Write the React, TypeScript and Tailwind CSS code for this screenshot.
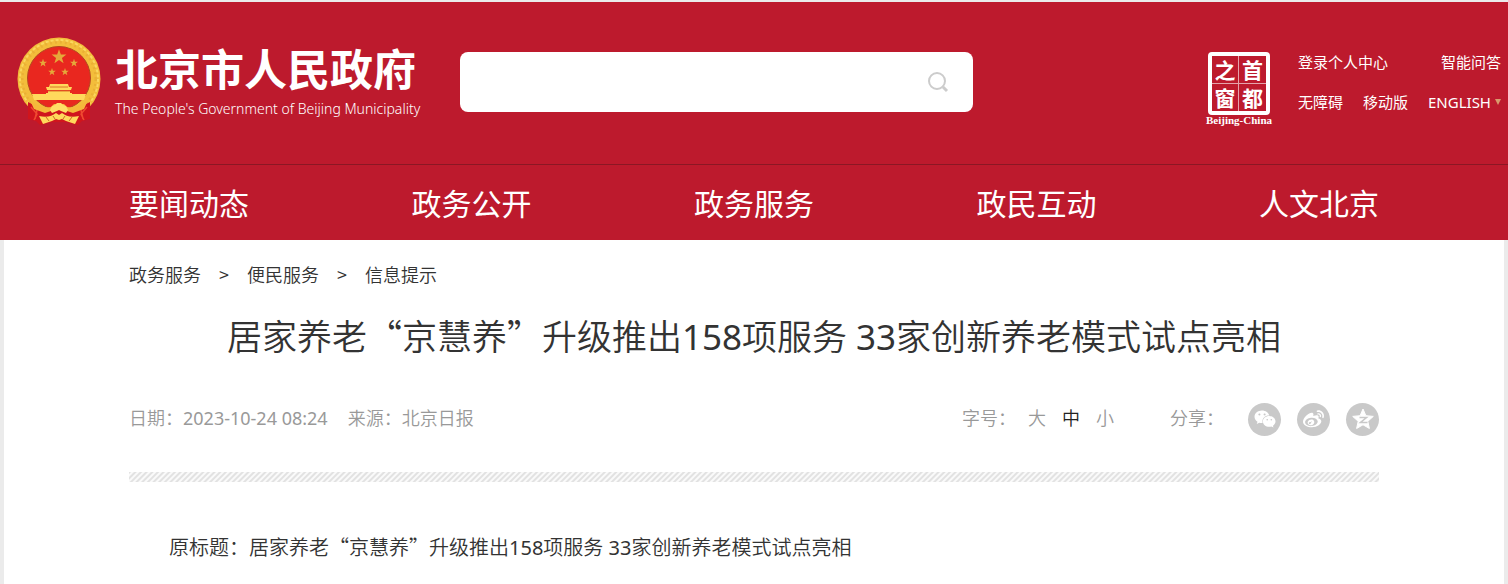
import { useState } from 'react';
import type { ReactNode } from 'react';
import { FaWeibo, FaWeixin } from 'react-icons/fa';

const navItems = ['要闻动态', '政务公开', '政务服务', '政民互动', '人文北京'];
const crumbs = ['政务服务', '便民服务', '信息提示'];
const sizes = ['大', '中', '小'];

const Latin = ({ children }: { children: ReactNode }) => (
  <span className="font-['Noto_Sans'] font-normal">{children}</span>
);

const STAR = 'M0-10 2.4-3.2 9.5-3.1 3.8 1.2 5.9 8.1 0 4-5.9 8.1-3.8 1.2-9.5-3.1-2.4-3.2Z';

const Emblem = () => (
  <svg width="84" height="89" viewBox="0 0 84 89" aria-hidden="true">
    <circle cx="42" cy="42" r="41.5" fill="#f3bd3b" />
    <circle cx="42" cy="42" r="37" fill="none" stroke="#eab035" strokeWidth="3" strokeDasharray="2 3" />
    <circle cx="42" cy="42" r="39" fill="none" stroke="#fad75f" strokeWidth="2" strokeDasharray="3 2" />
    <circle cx="42" cy="41" r="31.5" fill="#e9271f" stroke="#b3481f" strokeWidth="1" />
    <g fill="#e5a83a">
      <path d={STAR} transform="translate(42 20) scale(.78)" />
      <path d={STAR} transform="translate(26 26) scale(.42)" />
      <path d={STAR} transform="translate(57 26) scale(.42)" />
      <path d={STAR} transform="translate(35 35) scale(.4)" />
      <path d={STAR} transform="translate(48 35) scale(.4)" />
    </g>
    {/* gate tower */}
    <path d="M33 47h18l1 3h3l-1 3H30l-1-3h3ZM31 54h22v2h2v3H29v-3h2Z" fill="#ffd95c" />
    <path d="M15 57h54l-2 6H17Z" fill="#ffd95c" />
    <path d="M33 50h18M31 54h22" stroke="#dc7526" />
    {/* ribbon */}
    <path d="M11 65v17l8 2 4 4 12-3h14l12 3 4-4 8-2V65l-12 6H23Z" fill="#d0151d" />
    <path d="M14 70l6 7-3 6M70 70l-6 7 3 6M20 73l-2 9M64 73l2 9" stroke="#f04a30" strokeWidth="1.5" fill="none" />
    {/* gear and wheat */}
    <path d="M12 61c6 7 13 10 22 9l3-3h10l3 3c9 1 16-2 22-9l-5 11-11 4-9-3-5-2-5 2-9 3-11-4Z" fill="#f5b83b" />
    <path d="M33 73l2-4 3-1 2-2h4l2 2 3 1 2 4-2 3-5-2-2-1-2 1-5 2Z" fill="#ffdf66" />
    <path d="M22 79c8 2 13 0 17-3l3 2 3-2c4 3 9 5 17 3l-4 8-9-3-4-2-3 1-3-1-4 2-9 3Z" fill="#ffd95c" />
    <path d="M29 80l3 4M36 79l2 3M55 80l-3 4M48 79l-2 3" stroke="#ca6b23" />
  </svg>
);

const QzoneIcon = () => (
  <svg width="24" height="24" viewBox="0 0 24 24" aria-hidden="true">
    <path
      d="M12 2l2.9 6.7 7.4.7-5.5 4.9 1.6 7.2-6.4-3.7-6.4 3.7 1.6-7.2L1.7 9.4l7.4-.7Z"
      fill="white"
      stroke="white"
      strokeLinejoin="round"
    />
    <path d="M8.5 10.5h7l-6 5h7" stroke="#c9c9c9" strokeWidth="1.6" fill="none" />
  </svg>
);

const shares = [
  { name: '微信', icon: <FaWeixin size={22} /> },
  { name: '微博', icon: <FaWeibo size={21} /> },
  { name: 'QQ空间', icon: <QzoneIcon /> },
];

const Seal = () => (
  <a href="#" className="flex w-[70px] shrink-0 flex-col items-center" aria-label="首都之窗">
    <div className="w-[62px] rounded-sm border-4 border-white">
      <div className="grid grid-cols-2 divide-x divide-white/60 border-b border-white/60 text-center text-[21px] leading-[27px] font-bold">
        <span>之</span>
        <span>首</span>
      </div>
      <div className="grid grid-cols-2 divide-x divide-white/60 text-center text-[21px] leading-[27px] font-bold">
        <span>窗</span>
        <span>都</span>
      </div>
    </div>
    <span className="font-['Liberation_Serif'] text-[11px] leading-[10px] font-bold">Beijing-China</span>
  </a>
);

const Header = () => (
  <header className="bg-[#bd1a2d] text-white">
    <div className="flex h-[162px] items-start pr-[7px] pl-[17px]">
      <a href="#" className="flex shrink-0 items-start gap-3.5 pt-[35px]">
        <Emblem />
        <div className="pt-1">
          <div className="text-[43px] leading-[52px] font-bold">北京市人民政府</div>
          <div className="mt-1 font-['Noto_Sans'] text-[14px] leading-[24px]">
            The People's Government of Beijing Municipality
          </div>
        </div>
      </a>
      <div className="flex min-w-0 flex-1 justify-between pt-[50px] pl-10">
        <form className="flex h-[60px] w-[513px] items-center rounded-lg bg-white pr-6">
          <input type="text" aria-label="搜索" className="h-full min-w-0 flex-1 px-4 text-lg text-[#333] outline-none" />
          <button type="button" aria-label="搜索">
            <svg width="22" height="22" viewBox="0 0 22 22" fill="none" stroke="#cccccc" strokeWidth="2">
              <circle cx="10" cy="10" r="8" />
              <path d="M16 16l4 4" strokeWidth="3" />
            </svg>
          </button>
        </form>
        <div className="flex shrink-0 gap-6">
          <Seal />
          <div className="w-[203px] text-[15px] leading-[20px] font-normal">
            <div className="flex justify-between">
              <a href="#">登录个人中心</a>
              <a href="#">智能问答</a>
            </div>
            <div className="mt-5 flex justify-between">
              <a href="#">无障碍</a>
              <a href="#">移动版</a>
              <a href="#" className="flex items-center gap-1">
                <Latin>ENGLISH</Latin>
                <span className="border-x-3 border-t-6 border-x-transparent border-t-[#d99a6c]" />
              </a>
            </div>
          </div>
        </div>
      </div>
    </div>
    <nav className="border-t border-[#8b1724]">
      <div className="mx-auto flex h-[75px] max-w-[1250px] items-center justify-between text-[30px] font-normal">
        {navItems.map(item => (
          <a key={item} href="#">{item}</a>
        ))}
      </div>
    </nav>
  </header>
);

export default function App() {
  const [size, setSize] = useState('中');

  return (
    <div lang="zh-CN" className="flex min-h-screen flex-col bg-[#ebebeb] pt-0.5 font-['Noto_Sans_CJK_SC',sans-serif] font-[350] text-[#333]">
      <Header />

      <main className="mx-auto w-full max-w-[1500px] flex-1 bg-white">
        <div className="mx-auto max-w-[1250px]">
          <div className="flex pt-[21px] text-[18px] leading-[26px]">
            {crumbs.map((crumb, i) => (
              <div key={crumb} className="flex">
                {i > 0 && <span className="w-[46px] text-center">&gt;</span>}
                <a href="#">{crumb}</a>
              </div>
            ))}
          </div>

          <h1 className="pt-[22px] text-center text-[35px] leading-[52px]">
            居家养老“京慧养”升级推出<Latin>158</Latin>项服务<Latin> 33</Latin>家创新养老模式试点亮相
          </h1>

          {/* Date, font size, share */}
          <div className="mt-[39px] flex h-[34px] items-center justify-between text-[18px] leading-[26px] text-[#999]">
            <div className="flex gap-5 pb-1">
              <span>日期：<Latin>2023-10-24 08:24</Latin></span>
              <span>来源：北京日报</span>
            </div>
            <div className="flex items-center">
              <span className="mr-3 pb-1">字号：</span>
              <div className="flex gap-4 pb-1">
                {sizes.map(s => (
                  <button key={s} onClick={() => setSize(s)} className={s === size ? 'text-[#222]' : ''}>
                    {s}
                  </button>
                ))}
              </div>
              <span className="mr-6 ml-14 pb-1">分享：</span>
              <div className="flex gap-4">
                {shares.map(s => (
                  <button
                    key={s.name}
                    title={s.name}
                    className="flex size-[33px] items-center justify-center rounded-full bg-[#c9c9c9] text-white"
                  >
                    {s.icon}
                  </button>
                ))}
              </div>
            </div>
          </div>

          <div className="mt-9 h-2.5 bg-[repeating-linear-gradient(135deg,#e2e2e2_0px,#e2e2e2_1px,#fafafa_2px,#fafafa_3px,#e2e2e2_4px)]" />

          <p className="px-10 pt-[50px] text-[20px] leading-[30px]">
            原标题：居家养老“京慧养”升级推出<Latin>158</Latin>项服务<Latin> 33</Latin>家创新养老模式试点亮相
          </p>
        </div>
      </main>
    </div>
  );
}
